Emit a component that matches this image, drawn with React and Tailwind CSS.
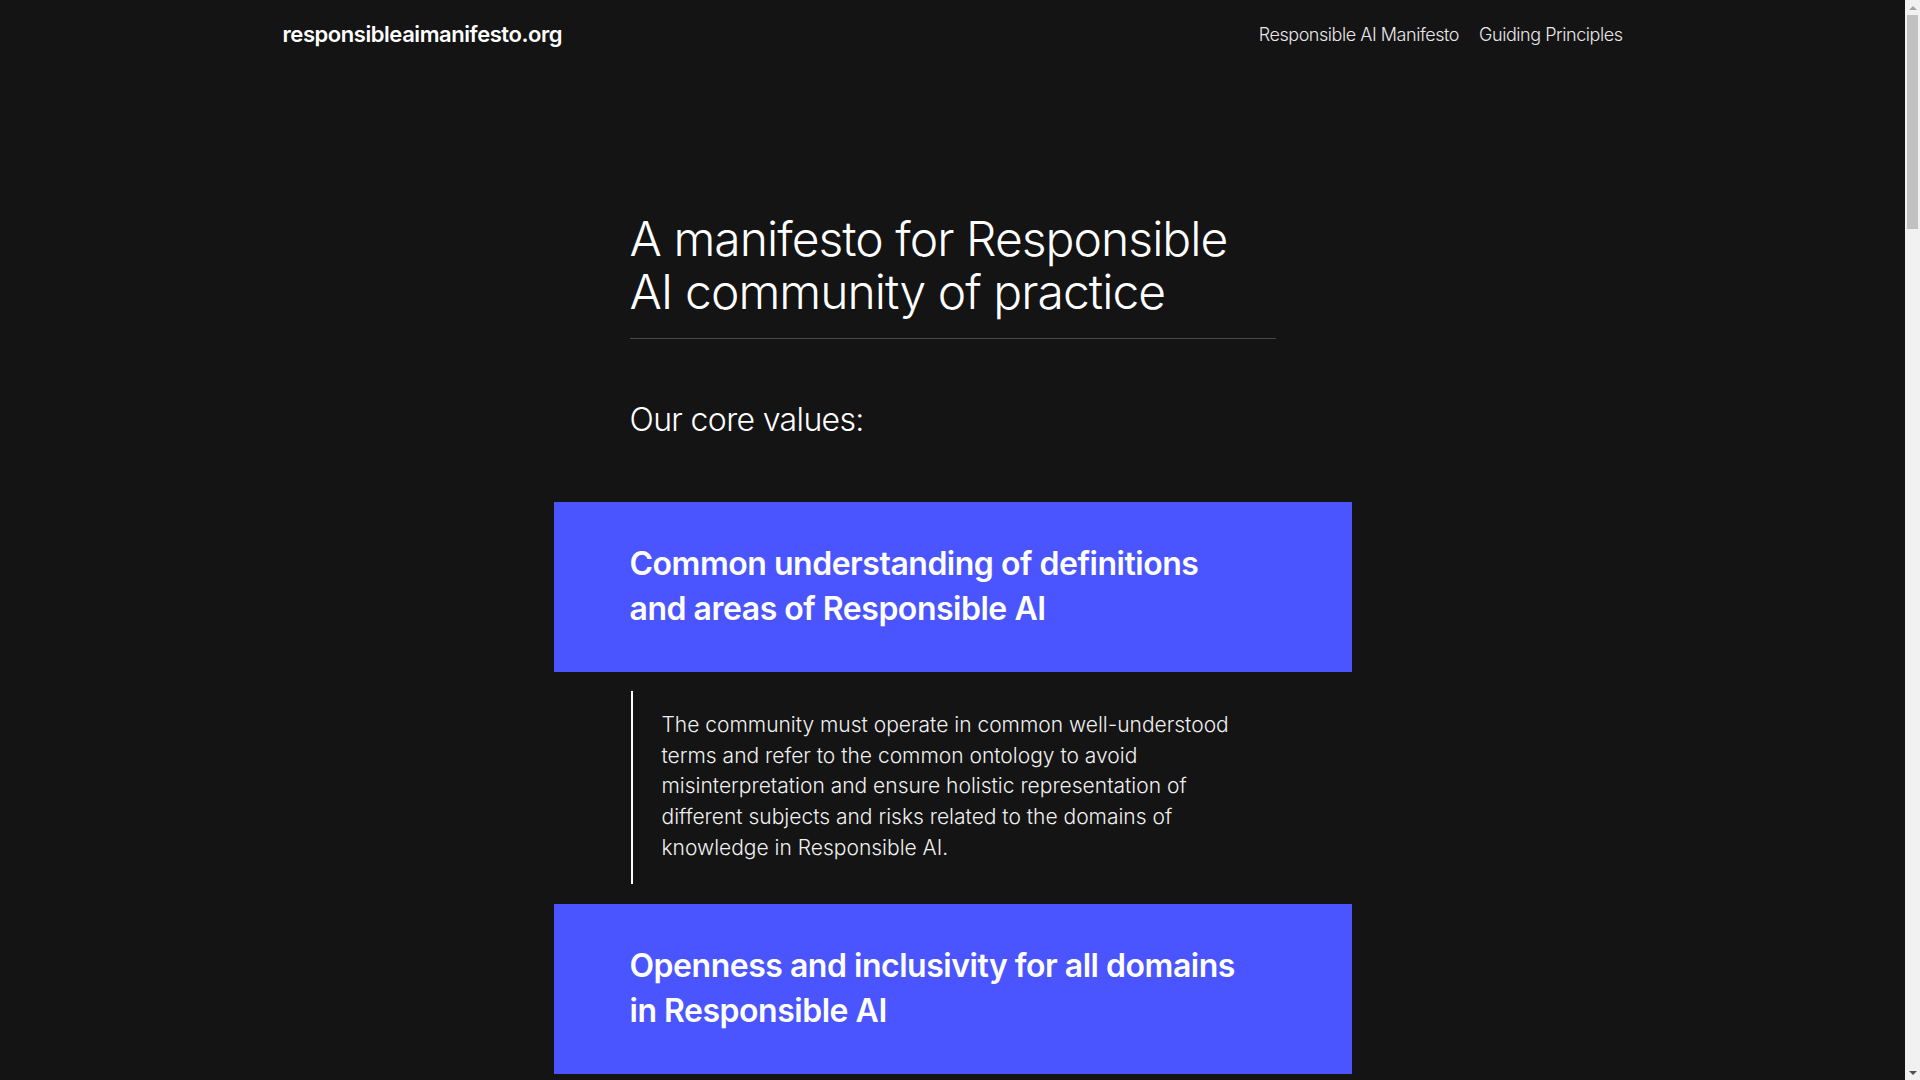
const values = [
    {
        title: "Common understanding of definitions and areas of Responsible AI",
        text: "The community must operate in common well-understood terms and refer to the common ontology to avoid misinterpretation and ensure holistic representation of different subjects and risks related to the domains of knowledge in Responsible AI.",
    },
    {
        title: "Openness and inclusivity for all domains in Responsible AI",
        text: "The community must be open to practitioners from all disciplines and backgrounds, and welcome every perspective that helps to build trustworthy, fair and accountable AI systems.",
    },
    {
        title: "Practical and evidence-based approach",
        text: "The community must focus on practical, actionable guidance grounded in evidence and real-world experience of designing, building and operating AI systems.",
    },
]

// classic scrollbar look from the screenshot, drawn on top of the page edge
const FakeScrollbar = () => (
    <div className="fixed top-0 right-0 h-screen w-[15px] bg-[#f1f1f1] flex flex-col items-center">
        <div className="h-[15px] flex items-center justify-center">
            <div className="w-0 h-0 border-l-[4px] border-r-[4px] border-b-[4px] border-l-transparent border-r-transparent border-b-[#a3a3a3]" />
        </div>
        <div className="w-[11px] h-[214px] bg-[#c1c1c1]" />
        <div className="flex-1" />
        <div className="h-[15px] flex items-center justify-center">
            <div className="w-0 h-0 border-l-[4px] border-r-[4px] border-t-[4px] border-l-transparent border-r-transparent border-t-[#505050]" />
        </div>
    </div>
)

const App = () => {
    return (
        <div className="min-h-screen bg-[#141414] text-white" style={{ fontFamily: "Inter, 'Noto Sans', sans-serif" }}>
            <div className="mr-[15px]">
                <header className="max-w-[1340px] mx-auto h-[68px] flex items-center justify-between">
                    <a href="#" className="text-[22px] font-semibold tracking-[-0.02em] text-white">
                        responsibleaimanifesto.org
                    </a>
                    <nav className="flex items-center gap-[20px] text-[18px] font-light tracking-[-0.025em] text-[#e8e8e8]">
                        <a href="#">Responsible AI Manifesto</a>
                        <a href="#">Guiding Principles</a>
                    </nav>
                </header>

                <main className="pt-[144px] pb-20">
                    <div className="max-w-[646px] mx-auto">
                        <h1 className="text-[48px] leading-[53px] font-light tracking-[-0.02em] pb-5 border-b border-[#4a4a4a]">
                            A manifesto for Responsible AI community of practice
                        </h1>
                        <h2 className="mt-[62px] text-[32px] leading-[38px] font-light tracking-[-0.02em]">
                            Our core values:
                        </h2>
                    </div>

                    <div className="mt-[63px] max-w-[798px] mx-auto space-y-5">
                        {values.map((v) => (
                            <section key={v.title} className="space-y-[19px]">
                                <div className="bg-[#4a55ff] px-[76px] pt-[39px] pb-[41px]">
                                    <h3 className="max-w-[630px] text-[32px] leading-[45px] font-semibold tracking-[-0.015em]">{v.title}</h3>
                                </div>
                                <blockquote className="mx-[77px] border-l-2 border-white pl-[29px] pr-6 pt-[19px] pb-5">
                                    <p className="text-[21px] leading-[30.7px] font-light text-[#f0f0f0]">{v.text}</p>
                                </blockquote>
                            </section>
                        ))}
                    </div>
                </main>
            </div>
            <FakeScrollbar />
        </div>
    )
}

export default App
